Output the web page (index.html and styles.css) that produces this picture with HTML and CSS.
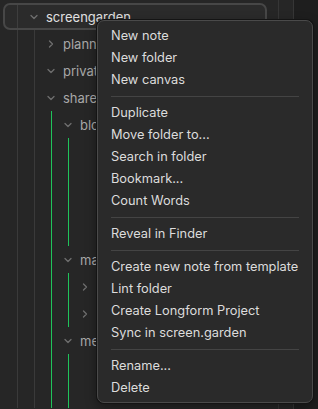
FILE: index.html
```html
<!DOCTYPE html>
<html lang="en">
<head>
    <meta charset="UTF-8">
    <title>Vault</title>
    <link rel="stylesheet" href="styles.css">
</head>
<body>
    <div class="workspace">
        <div class="sidebar">
            <div class="tree">
                <div class="row selected">
                    <svg class="chev" viewBox="0 0 12 12"><path d="M3 4.5 L6 7.5 L9 4.5"/></svg>
                    <span class="name">screengarden</span>
                </div>
                <div class="children">
                    <div class="row">
                        <svg class="chev" viewBox="0 0 12 12"><path d="M4.5 3 L7.5 6 L4.5 9"/></svg>
                        <span class="name">planner</span>
                    </div>
                    <div class="row">
                        <svg class="chev" viewBox="0 0 12 12"><path d="M3 4.5 L6 7.5 L9 4.5"/></svg>
                        <span class="name">private</span>
                    </div>
                    <div class="row">
                        <svg class="chev" viewBox="0 0 12 12"><path d="M3 4.5 L6 7.5 L9 4.5"/></svg>
                        <span class="name">shared</span>
                    </div>
                    <div class="children green">
                        <div class="row">
                            <svg class="chev" viewBox="0 0 12 12"><path d="M3 4.5 L6 7.5 L9 4.5"/></svg>
                            <span class="name">blog</span>
                        </div>
                        <div class="children green">
                            <div class="row"></div>
                            <div class="row"></div>
                            <div class="row"></div>
                            <div class="row"></div>
                        </div>
                        <div class="row">
                            <svg class="chev" viewBox="0 0 12 12"><path d="M3 4.5 L6 7.5 L9 4.5"/></svg>
                            <span class="name">maps</span>
                        </div>
                        <div class="children green">
                            <div class="row">
                                <svg class="chev" viewBox="0 0 12 12"><path d="M4.5 3 L7.5 6 L4.5 9"/></svg>
                            </div>
                            <div class="row">
                                <svg class="chev" viewBox="0 0 12 12"><path d="M4.5 3 L7.5 6 L4.5 9"/></svg>
                            </div>
                        </div>
                        <div class="row">
                            <svg class="chev" viewBox="0 0 12 12"><path d="M3 4.5 L6 7.5 L9 4.5"/></svg>
                            <span class="name">meetings</span>
                        </div>
                        <div class="children green">
                            <div class="row"></div>
                            <div class="row"></div>
                        </div>
                    </div>
                </div>
            </div>
        </div>
        <div class="strip"></div>
        <div class="pane"></div>
    </div>

    <!-- Menu contextual de la carpeta -->
    <div class="menu">
        <div class="item">New note</div>
        <div class="item">New folder</div>
        <div class="item">New canvas</div>
        <div class="sep"></div>
        <div class="item">Duplicate</div>
        <div class="item">Move folder to...</div>
        <div class="item">Search in folder</div>
        <div class="item">Bookmark...</div>
        <div class="item">Count Words</div>
        <div class="sep"></div>
        <div class="item">Reveal in Finder</div>
        <div class="sep"></div>
        <div class="item">Create new note from template</div>
        <div class="item">Lint folder</div>
        <div class="item">Create Longform Project</div>
        <div class="item">Sync in screen.garden</div>
        <div class="sep"></div>
        <div class="item">Rename...</div>
        <div class="item">Delete</div>
    </div>
</body>
</html>
```

FILE: styles.css
```css
body {
    margin: 0;
    padding: 0;
    font-family: Inter, "Noto Sans", sans-serif;
    background-color: #1e1e1e;
    height: 409px;
    overflow: hidden;
}

.workspace {
    display: flex;
    height: 409px;
}

.sidebar {
    width: 278px;
    background-color: #262626;
    border-right: 1px solid #363636;
    padding-top: 3px;
    overflow: hidden;
}

.strip {
    width: 14px;
    background-color: #262626;
    border-right: 1px solid #363636;
}

.pane {
    flex: 1;
    background-color: #1e1e1e;
}

/* Arbol de carpetas */
.tree {
    margin-left: 17px;
    border-left: 1px solid #3a3a3a;
}

.row {
    height: 27px;
    display: flex;
    align-items: center;
    padding-left: 10px;
    color: #a8a8a8;
    font-size: 13px;
    white-space: nowrap;
    box-sizing: border-box;
}

.row.selected {
    height: 27px;
    margin-left: -15px;
    margin-right: 11px;
    padding-left: 23px;
    background-color: rgba(255, 255, 255, 0.025);
    border: 2px solid #474747;
    border-radius: 7px;
    color: #e0e0e0;
}

.chev {
    width: 12px;
    height: 12px;
    margin-right: 6px;
    flex-shrink: 0;
}

.chev path {
    fill: none;
    stroke: #6e6e6e;
    stroke-width: 1.3;
    stroke-linecap: round;
    stroke-linejoin: round;
}

.children {
    margin-left: 16px;
    border-left: 1px solid #3a3a3a;
}

.children.green {
    border-left-color: #1fc35a;
}

/* Menu flotante */
.menu {
    position: absolute;
    left: 97px;
    top: 20px;
    width: 214px;
    padding: 4px 0 3px 0;
    background-color: #2a2a2a;
    border: 1px solid #4a4a4a;
    border-radius: 7px;
    box-shadow: 0 0 0 1px #141414, 0 4px 12px rgba(0, 0, 0, 0.4);
}

.menu .item {
    height: 22px;
    line-height: 22px;
    padding-left: 13px;
    color: #dcdcdc;
    font-size: 12.8px;
    white-space: nowrap;
}

.menu .sep {
    height: 1px;
    margin: 5px 13px 5px 13px;
    background-color: #444;
}
```
